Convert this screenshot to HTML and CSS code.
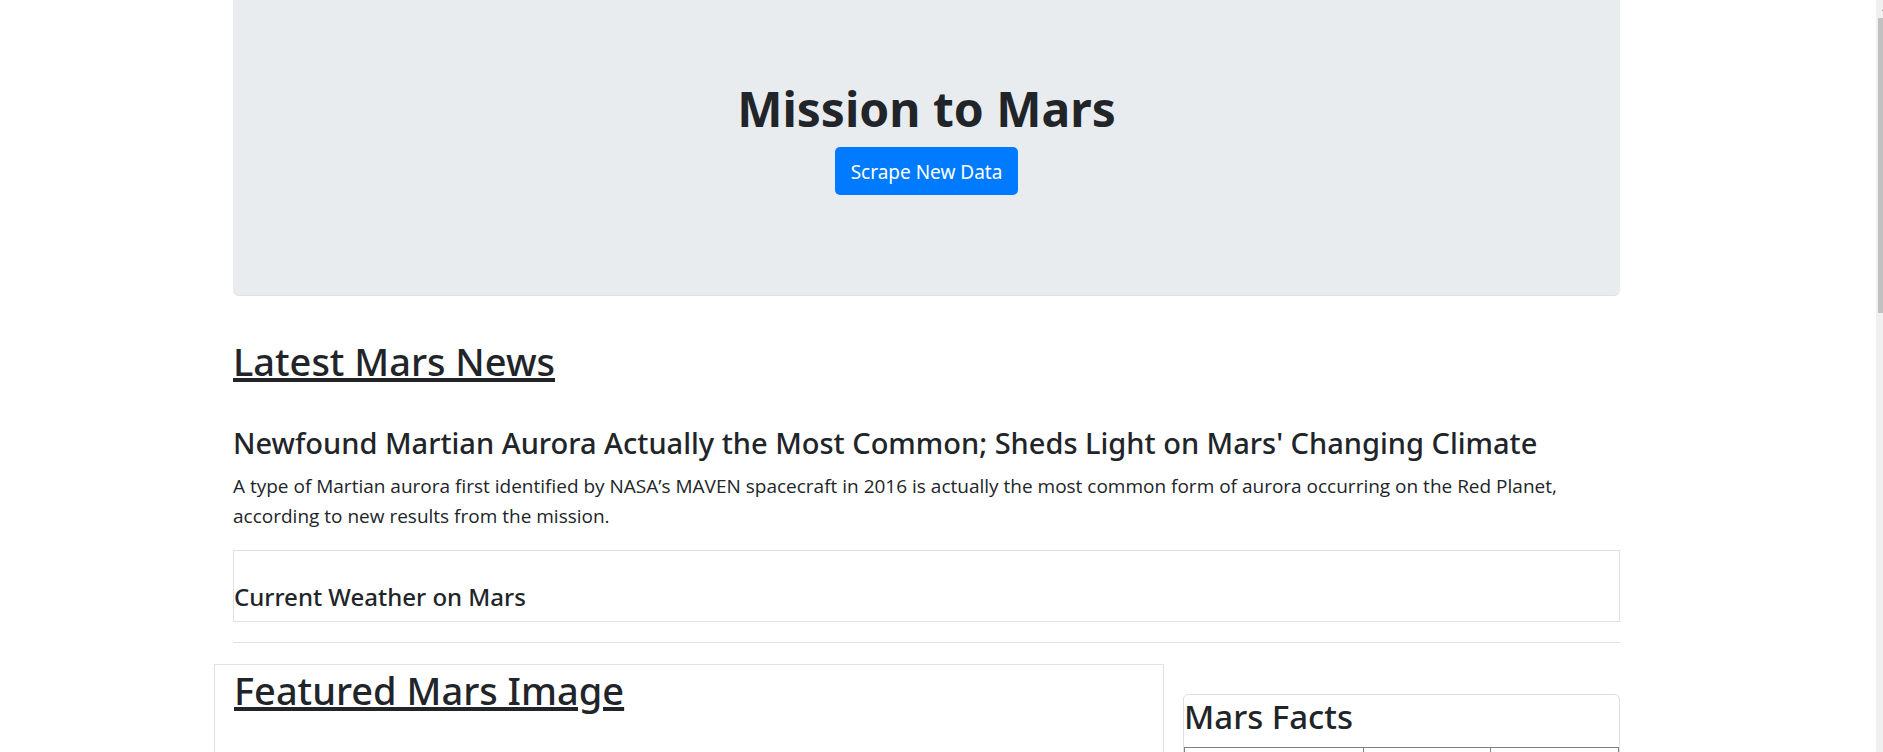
FILE: index.html
```html
<!DOCTYPE html>
<html lang="en">
<head>
<meta charset="utf-8">
<title>Mission to Mars</title>
<link rel="stylesheet" href="styles.css">
</head>
<body>
<div class="viewport">
  <main class="page">
    <div class="container">
      <header class="jumbotron">
        <h1 class="title">Mission to Mars</h1>
        <button class="btn" type="button">Scrape New Data</button>
      </header>
      <section class="news">
        <h2 class="section-title">Latest Mars News</h2>
        <h3 class="headline">Newfound Martian Aurora Actually the Most Common; Sheds Light on Mars' Changing Climate</h3>
        <p class="teaser">A type of Martian aurora first identified by NASA’s MAVEN spacecraft in 2016 is actually the most common form of aurora occurring on the Red Planet, according to new results from the mission.</p>
      </section>
      <section class="weather">
        <h4 class="weather-title">Current Weather on Mars</h4>
      </section>
      <hr class="rule">
      <div class="row">
        <section class="featured">
          <h2 class="section-title">Featured Mars Image</h2>
        </section>
        <section class="facts-column">
          <div class="facts">
            <h3 class="facts-title">Mars Facts</h3>
            <table class="facts-table">
              <colgroup><col class="col-label"><col class="col-mars"><col class="col-earth"></colgroup>
              <tbody><tr><td></td><td></td><td></td></tr></tbody>
            </table>
          </div>
        </section>
      </div>
    </div>
  </main>
  <div class="scrollbar" aria-hidden="true">
    <svg class="arrow" viewBox="0 0 7 18"><path d="M6 10h1v1H6z" fill="#8b8b8b"/></svg>
    <div class="thumb"></div>
  </div>
</div>
</body>
</html>
```
FILE: styles.css
```css
* { box-sizing: border-box; }

body {
  margin: 0;
  background: #fff;
  color: #212529;
  font-family: "Noto Sans", "Open Sans", sans-serif;
  font-size: 19px;
  font-weight: 400;
  line-height: 30px;
}

h1, h2, h3, h4, p { margin: 0; }

.viewport {
  display: flex;
  height: 100vh;
  overflow: hidden;
}

.page {
  flex: 1;
  padding-right: 23px;
}

.container {
  max-width: 1425px;
  margin: 0 auto;
  padding: 0 19px;
}

.jumbotron {
  padding: 79px 40px 100px;
  border-bottom: 1px solid #dee2e6;
  border-radius: 0 0 6px 6px;
  background: #e9ecef;
  text-align: center;
}

.title {
  margin-bottom: 8px;
  font-size: 48px;
  font-weight: 700;
  line-height: 60px;
}

.btn {
  display: inline-block;
  padding: 10px 16px 8px;
  border: 0;
  border-radius: 5px;
  background: #007bff;
  color: #fff;
  font: inherit;
  vertical-align: top;
}

.news { padding-top: 41px; }

.section-title {
  font-size: 38px;
  font-weight: 500;
  line-height: 48px;
  text-decoration: underline;
  text-decoration-thickness: 4px;
  text-underline-offset: 2px;
}

.headline {
  margin: 40px 0 10px;
  font-size: 29px;
  font-weight: 500;
  line-height: 36px;
}

.teaser {
  font-family: "Open Sans", "Noto Sans", sans-serif;
}

.weather {
  margin-top: 19px;
  padding: 31px 0 9px;
  border: 1px solid #dee2e6;
}

.weather-title {
  font-size: 24px;
  font-weight: 500;
  line-height: 30px;
}

.rule {
  margin: 20px 0 21px;
  border: 0;
  border-top: 1px solid #e2e3e4;
}

.row {
  display: grid;
  grid-template-columns: 2fr 1fr;
  margin: 0 -19px;
}

.featured {
  min-height: 500px;
  padding: 1px 19px;
  border: 1px solid #dee2e6;
}

.facts-column { padding: 30px 19px 0; }

.facts {
  border: 1px solid #dfdfdf;
  border-radius: 5px;
}

.facts-title {
  padding-top: 1px;
  margin-bottom: 9px;
  font-size: 33px;
  font-weight: 500;
  line-height: 42px;
}

.facts-table {
  width: 100%;
  border-collapse: collapse;
  table-layout: fixed;
}

.facts-table td {
  height: 36px;
  border: 1px solid #808080;
}

.col-label { width: 179px; }
.col-mars { width: 127px; }

.scrollbar {
  width: 7px;
  padding-left: 2px;
  background: #f0f0f0;
}

.arrow {
  display: block;
  width: 7px;
  height: 18px;
  margin-left: -2px;
}

.thumb {
  height: 295px;
  background: #c1c1c1;
}
```
